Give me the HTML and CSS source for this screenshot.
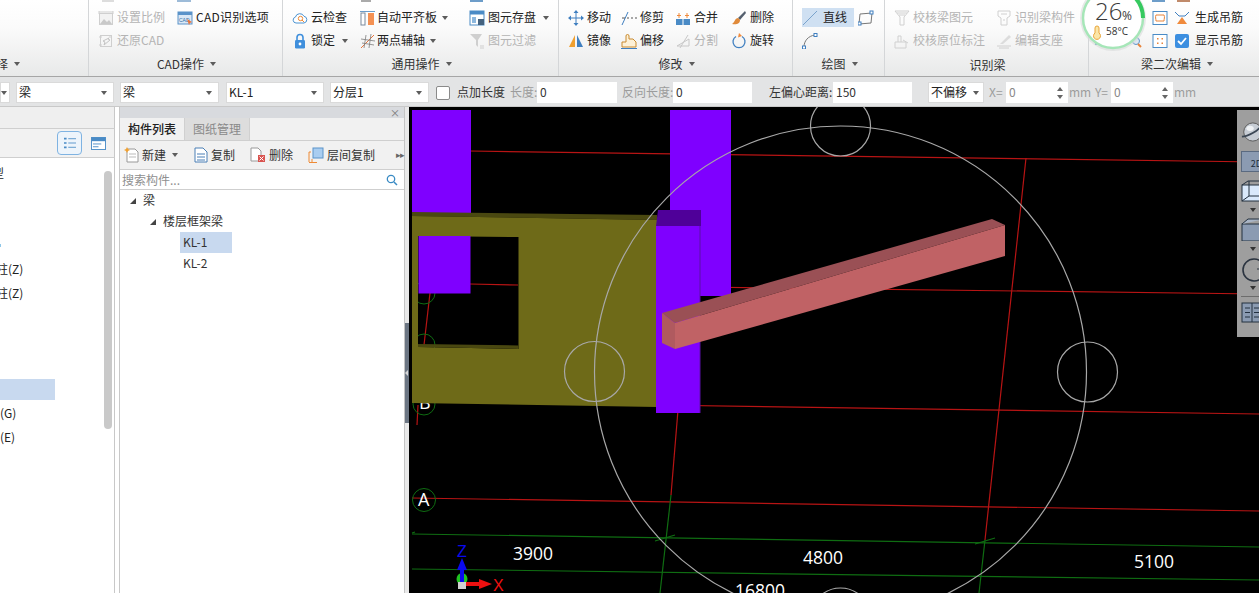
FILE: index.html
```html
<!DOCTYPE html>
<html lang="zh-CN">
<head>
<meta charset="utf-8">
<title>梁 绘图</title>
<link rel="stylesheet" href="styles.css">
</head>
<body>
<div class="app">
  <header class="ribbon">
    <section class="group g0">
      <div class="rows"></div>
      <div class="label label-end"><span class="clip-4">择</span><i class="caret"></i></div>
    </section>
    <section class="group g1">
      <div class="rows">
        <div class="item off"><svg class="ico" viewBox="0 0 16 16"><rect x="1.5" y="3.5" width="13" height="11" fill="#f2f2f2" stroke="#cfcfcf"/><path d="M2 14l4-5 3 3 2-2 3 4z" fill="#c9c9c9"/><path d="M1 1v3M15 1v3M1 2h14" stroke="#cfcfcf" fill="none"/></svg>设置比例</div>
        <div class="item"><svg class="ico" viewBox="0 0 16 16"><rect x="1" y="2" width="14" height="12" fill="#dbe8f5" stroke="#5b93c9"/><rect x="1" y="2" width="14" height="3" fill="#5b93c9"/><text x="2" y="12" class="mini">CAD</text><path d="M10 9l5 3-2 1-1 2z" fill="#e8743b"/></svg><span class="wide">CAD识别选项</span></div>
        <div class="item off"><svg class="ico" viewBox="0 0 16 16"><rect x="2.5" y="2.5" width="11" height="11" fill="none" stroke="#cfcfcf"/><path d="M11 5l-6 3 2 1-1 3 6-5-2-1z" fill="none" stroke="#c4c4c4"/><path d="M1 4h3M1 12h3M12 2v3" stroke="#cfcfcf"/></svg>还原CAD</div>
      </div>
      <div class="label">CAD操作<i class="caret"></i></div>
    </section>
    <section class="group g2">
      <div class="rows">
        <div class="item"><svg class="ico" viewBox="0 0 16 16"><path d="M4 13a3 3 0 0 1-.6-5.9A4.6 4.6 0 0 1 12 6.3 3.4 3.4 0 0 1 12 13z" fill="#fff" stroke="#4b93d1"/><circle cx="8.5" cy="8.5" r="2.2" fill="none" stroke="#ee8a35"/><path d="M10 10l2 2" stroke="#ee8a35"/></svg>云检查</div>
        <div class="item tight"><svg class="ico" viewBox="0 0 16 16"><rect x="1" y="3" width="4" height="12" fill="#fff" stroke="#7a8a9c"/><rect x="8" y="3" width="6" height="12" fill="#f49153"/><path d="M0 1.5h15" stroke="#6d9dc9"/></svg>自动平齐板<i class="caret"></i></div>
        <div class="item"><svg class="ico" viewBox="0 0 16 16"><rect x="1" y="1" width="14" height="14" fill="#fff" stroke="#4a8bc6"/><rect x="1" y="1" width="14" height="3.5" fill="#4a8bc6"/><rect x="3" y="7" width="4" height="6" fill="#8db8de"/><rect x="9" y="9" width="6" height="6" fill="#44627f"/></svg>图元存盘<i class="caret"></i></div>
        <div class="item"><svg class="ico" viewBox="0 0 16 16"><path d="M5 7V4.5a3 3 0 0 1 6 0V7" fill="none" stroke="#3f8fdc" stroke-width="1.6"/><rect x="3" y="7" width="10" height="8.5" rx="1.2" fill="#3f8fdc"/><circle cx="8" cy="11" r="1.4" fill="#fff"/></svg>锁定<i class="caret"></i></div>
        <div class="item tight"><svg class="ico" viewBox="0 0 16 16"><path d="M1 15L14 2" stroke="#e8743b"/><path d="M1 6l14 2M2 10l12 2M6 2l-2 13M11 1L9 15" stroke="#7d7d7d" stroke-width=".8" fill="none"/></svg>两点辅轴<i class="caret"></i></div>
        <div class="item off"><svg class="ico" viewBox="0 0 16 16"><path d="M1 1h12L9 7v7l-2-2V7z" fill="#cfcfcf"/><path d="M11 13h4M11 15h4" stroke="#cfcfcf"/></svg>图元过滤</div>
      </div>
      <div class="label">通用操作<i class="caret"></i></div>
    </section>
    <section class="group g3">
      <div class="rows">
        <div class="item"><svg class="ico" viewBox="0 0 16 16"><path d="M8 2v12M2 8h12" stroke="#3f7fc0"/><path d="M8 0l2.500 3h-5zM8 16l2.500-3h-5zM0 8l3-2.500v5zM16 8l-3-2.500v5z" fill="#3f7fc0"/></svg>移动</div>
        <div class="item"><svg class="ico" viewBox="0 0 16 16"><path d="M1 15L7 2" stroke="#3f7fc0"/><path d="M1 8h3M6 8h2M10 8h2M14 8h2" stroke="#555"/></svg>修剪</div>
        <div class="item"><svg class="ico" viewBox="0 0 16 16"><rect x="1" y="9" width="14" height="6" fill="#4a8bc6"/><path d="M8 9v6" stroke="#fff"/><path d="M4 3v5M2 5.500h4M12 3v5M10 5.500h4" stroke="#f08a3c"/></svg>合并</div>
        <div class="item"><svg class="ico" viewBox="0 0 16 16"><path d="M14 1L7 8l2 2 6-7z" fill="#55606e"/><path d="M7 8c-3 0-3 4-6 6 4 1 8 0 8-4z" fill="#e08a3a"/></svg>删除</div>
        <div class="item"><svg class="ico" viewBox="0 0 16 16"><path d="M7 2L1 14h6z" fill="#f0a030"/><path d="M9 2l6 12H9z" fill="#3f7fc0"/></svg>镜像</div>
        <div class="item"><svg class="ico" viewBox="0 0 16 16"><path d="M1 14v-5h4V3a1.500 1.500 0 0 1 3 0v3h4l3 3v5z" fill="#fdf1d8" stroke="#c98a2e"/><path d="M0 15.500h16" stroke="#3f7fc0"/></svg>偏移</div>
        <div class="item off"><svg class="ico" viewBox="0 0 16 16"><path d="M2 13h12L14 6 2 13z" fill="none" stroke="#c8c8c8"/><path d="M5 15L13 2" stroke="#c8c8c8"/></svg>分割</div>
        <div class="item"><svg class="ico" viewBox="0 0 16 16"><path d="M5 3.500A6 6 0 1 0 11 3.500" fill="none" stroke="#3f7fc0" stroke-width="1.3"/><path d="M8 0l3 3-4 1.500z" fill="#f08a3c"/></svg>旋转</div>
      </div>
      <div class="label">修改<i class="caret"></i></div>
    </section>
    <section class="group g4">
      <div class="rows">
        <div class="item active"><svg class="ico" viewBox="0 0 16 16"><path d="M1 15L15 1" stroke="#7aa3cc"/></svg>直线</div>
        <div class="item"><svg class="ico" viewBox="0 0 16 16"><path d="M2 4l12-1-1 10-12 1z" fill="none" stroke="#777"/><rect x="0" y="12" width="3" height="3" fill="#fff" stroke="#3f7fc0"/><rect x="12" y="1" width="3" height="3" fill="#fff" stroke="#3f7fc0"/></svg></div>
        <div class="item"><svg class="ico" viewBox="0 0 16 16"><path d="M2 14C2 8 6 3 13 2" fill="none" stroke="#777"/><rect x="0.500" y="13" width="3" height="3" fill="#fff" stroke="#3f7fc0"/><rect x="12" y="0.500" width="3" height="3" fill="#fff" stroke="#3f7fc0"/></svg></div>
      </div>
      <div class="label">绘图<i class="caret"></i></div>
    </section>
    <section class="group g5">
      <div class="rows">
        <div class="item off"><svg class="ico" viewBox="0 0 16 16"><path d="M1 1h14l-5 6v8H6V7z" fill="none" stroke="#d0d0d0"/><path d="M3 3h10M5 5h6" stroke="#d0d0d0"/></svg>校核梁图元</div>
        <div class="item off"><svg class="ico" viewBox="0 0 16 16"><path d="M2 1h12v5l-3 2v7H5V8L2 6z" fill="none" stroke="#d0d0d0"/><path d="M5 4h6M7 10h2" stroke="#d0d0d0"/></svg>识别梁构件</div>
        <div class="item off"><svg class="ico" viewBox="0 0 16 16"><path d="M1 9h11v6H1z" fill="none" stroke="#d0d0d0"/><path d="M4 9V3h3v6M9 7l5 3" stroke="#d0d0d0" fill="none"/></svg>校核原位标注</div>
        <div class="item off"><svg class="ico" viewBox="0 0 16 16"><path d="M1 13h14M3 15h10" stroke="#d0d0d0"/><path d="M4 11L13 2l2 2-8 7z" fill="#dcdcdc"/></svg>编辑支座</div>
      </div>
      <div class="label">识别梁</div>
    </section>
    <section class="group g6">
      <div class="rows">
        <div class="item"><svg class="ico" viewBox="0 0 16 16"><rect x="1" y="1.500" width="14" height="13" fill="#fff" stroke="#4a8bc6"/><path d="M4 5h8M4 11h8M4 5c-1 2 0 4 0 6M12 5c1 2 0 4 0 6" stroke="#e8843b" fill="none"/></svg></div>
        <div class="item loose"><svg class="ico" viewBox="0 0 16 16"><path d="M1 2l4 4h6l4-4" fill="none" stroke="#3f7fc0"/><path d="M8 7l5 7H3z" fill="#f08a3c"/></svg>生成吊筋</div>
        <div class="item"><svg class="ico" viewBox="0 0 16 16"><rect x="1" y="1.500" width="14" height="13" fill="#fff" stroke="#4a8bc6"/><path d="M5 5h1.500v1.500H5zM9.500 5H11v1.500H9.500zM5 9.500h1.500V11H5zM9.500 9.500H11V11H9.500z" fill="#e8843b"/></svg></div>
        <div class="item loose"><svg class="ico" viewBox="0 0 16 16"><rect x="1" y="1" width="14" height="14" rx="2" fill="#3d8fe0"/><path d="M4 8l3 3 5-6" fill="none" stroke="#fff" stroke-width="1.800"/></svg>显示吊筋</div>
      </div>
      <div class="label">梁二次编辑<i class="caret"></i></div>
    </section>
    <svg class="topbits" viewBox="0 0 1259 4" aria-hidden="true">
      <rect x="102" y="0" width="12" height="2" fill="#ddd"/>
      <rect x="177" y="0" width="14" height="2" fill="#9dbbd8"/>
      <rect x="361" y="0" width="10" height="2" fill="#aaa"/>
      <rect x="470" y="0" width="13" height="2" fill="#6d9dc9"/>
      <rect x="1152" y="0" width="13" height="2" fill="#6d9dc9"/>
      <rect x="1177" y="0" width="13" height="2" fill="#c08a6a"/>
    </svg>
    <svg class="gauge" viewBox="1078 0 74 56" aria-label="26% 58°C">
      <path d="M1096 41v4M1101 42v4M1106 42v4M1115 42h8" stroke="#4a8bc6" stroke-width="2" fill="none"/>
      <circle cx="1136" cy="41" r="3.500" fill="#dbe8f5" stroke="#5b93c9"/>
      <path d="M1138 44l3 3" stroke="#e8843b" stroke-width="2"/>
      <circle cx="1113" cy="18" r="33" class="g-shadow"/>
      <circle cx="1113" cy="18" r="30" class="g-disc"/>
      <path d="M1134 -3.500A30 30 0 0 1 1143 18" class="g-arc"/>
      <text x="1095" y="20" class="g-num">26</text>
      <text x="1122" y="20" class="g-pct">%</text>
      <path d="M1095 28a2 2 0 0 1 4 0v5a3.500 3.500 0 1 1-4 0z" fill="#fbe6a8" stroke="#e9a53a"/>
      <text x="1106" y="35" class="g-temp">58°C</text>
    </svg>
  </header>

  <div class="optbar">
    <div class="combo c-stub"><i class="caret"></i></div>
    <div class="combo c-98"><span>梁</span><i class="caret"></i></div>
    <div class="combo c-99"><span>梁</span><i class="caret"></i></div>
    <div class="combo c-98 m7"><span>KL-1</span><i class="caret"></i></div>
    <div class="combo c-99"><span>分层1</span><i class="caret"></i></div>
    <span class="check"></span>
    <span class="opt-text dark w48">点加长度</span>
    <span class="opt-text dim w27">长度:</span><span class="field f-80">0</span>
    <span class="opt-text dim w51">反向长度:</span><span class="field f-79">0</span>
    <span class="opt-text dark w64">左偏心距离:</span><span class="field f-79">150</span>
    <div class="combo c-56"><span>不偏移</span><i class="caret"></i></div>
    <span class="opt-text dim w17">X=</span>
    <span class="field spin dimval">0<i class="spinner"><b class="up"></b><b class="down"></b></i></span>
    <span class="opt-text dim w26">mm</span>
    <span class="opt-text dim w16">Y=</span>
    <span class="field spin dimval">0<i class="spinner"><b class="up"></b><b class="down"></b></i></span>
    <span class="opt-text dim">mm</span>
  </div>

  <main class="work">
    <aside class="nav">
      <div class="nav-head"></div>
      <div class="nav-tools">
        <span class="view-btn"><svg viewBox="0 0 16 14" class="view-ico"><path d="M1 2h3M1 7h3M1 12h3" stroke="#4a8bc6" stroke-width="2"/><path d="M6 2h9M6 7h9M6 12h9" stroke="#4a8bc6"/></svg></span>
        <svg viewBox="0 0 16 14" class="view-ico2"><rect x="0.500" y="0.500" width="15" height="13" fill="#fff" stroke="#4a8bc6"/><rect x="0.500" y="0.500" width="15" height="4" fill="#4a8bc6"/><path d="M2 7.500h9M2 10.500h6" stroke="#4a8bc6"/></svg>
      </div>
      <div class="nav-body">
        <ul class="nav-list">
          <li class="clip-8">型</li>
          <li></li>
          <li></li>
          <li><i class="nav-dot"></i></li>
          <li class="clip-4">柱(Z)</li>
          <li class="clip-4">柱(Z)</li>
          <li></li>
          <li></li>
          <li></li>
          <li><span class="nav-sel"></span></li>
          <li>(G)</li>
          <li>(E)</li>
        </ul>
        <div class="scroll"><div class="thumb"></div></div>
      </div>
    </aside>

    <section class="parts">
      <div class="parts-title"><span class="close">×</span></div>
      <div class="tabs">
        <span class="tab on">构件列表</span>
        <span class="tab">图纸管理</span>
      </div>
      <div class="parts-tools">
        <span class="ptool p-new"><svg class="ico" viewBox="0 0 16 16"><path d="M3 2h8l3 3v10H3z" fill="#fff" stroke="#999"/><path d="M5 7h7M5 10h7" stroke="#bbb"/><path d="M3 0l1 2 2 1-2 1-1 2-1-2-2-1 2-1z" fill="#f0a030"/></svg>新建<i class="caret"></i></span>
        <span class="ptool p-copy"><svg class="ico" viewBox="0 0 16 16"><path d="M2 1h8l4 4v10H2z" fill="#fff" stroke="#4a7fb5"/><path d="M4 7h8M4 10h8M4 13h8" stroke="#4a7fb5"/></svg>复制</span>
        <span class="ptool p-del"><svg class="ico" viewBox="0 0 16 16"><path d="M1 1h7l3 3v10H1z" fill="#fff" stroke="#999"/><rect x="8" y="8" width="7" height="7" fill="#d9534f"/><path d="M9.500 9.500l4 4M13.500 9.500l-4 4" stroke="#fff"/></svg>删除</span>
        <span class="ptool p-floor"><svg class="ico" viewBox="0 0 16 16"><path d="M1 15V5h2M4 15v-3" stroke="#ee8a35" fill="none"/><path d="M1 15.500h8" stroke="#ee8a35"/><rect x="5" y="1" width="10" height="10" fill="#a9cdf0" stroke="#5b93c9"/></svg>层间复制</span>
        <span class="more">▸▸</span>
      </div>
      <div class="search">
        <span class="search-text">搜索构件...</span>
        <svg class="search-ico" viewBox="0 0 12 12"><circle cx="5" cy="5" r="3.700" fill="none" stroke="#3a8bc4" stroke-width="1.300"/><path d="M8 8l3 3" stroke="#3a8bc4" stroke-width="1.500"/></svg>
      </div>
      <ul class="tree">
        <li class="lvl1"><i class="tw"></i>梁</li>
        <li class="lvl2"><i class="tw"></i>楼层框架梁</li>
        <li class="lvl3"><span class="leaf sel">KL-1</span></li>
        <li class="lvl3"><span class="leaf">KL-2</span></li>
      </ul>
    </section>

    <div class="splitter"><span class="grip"><i></i></span></div>

    <section class="viewport">
      <svg class="scene" viewBox="409 107 850 486" aria-label="三维视图">
        <g class="red">
          <path d="M470 151L1259 162"/>
          <path d="M700 287L1259 294"/>
          <path d="M470 284L518 285"/>
          <path d="M656 405L1259 414"/>
          <path d="M412 498L1259 511"/>
          <path d="M1026 158L985 540"/>
          <path d="M678 410L671 495"/>
          <path d="M430 293L424 345"/>
          <path d="M418 405L417 425"/>
        </g>
        <g class="green">
          <path d="M412 534L1259 547"/>
          <path d="M412 569L1259 580"/>
          <path d="M671 495L660 593"/>
          <path d="M985 540L979 593"/>
          <path d="M655 541L675 535M975 544L995 538M412 533l3-1"/>
          <circle cx="424" cy="293" r="11"/>
          <circle cx="424" cy="345" r="11"/>
          <circle cx="424" cy="404" r="11"/>
          <circle cx="424" cy="500" r="11.500"/>
        </g>
        <text x="419" y="409" class="axis">B</text>
        <text x="418" y="506" class="axis">A</text>

        <rect x="412" y="110" width="59" height="103" class="pur"/>
        <rect x="670" y="110" width="61" height="186" class="pur"/>

        <path d="M412 212L657 215V220L412 216z" class="olive-d"/>
        <path fill-rule="evenodd" d="M412 216L657 220V407L412 403zM418 236V347L518.500 349V237z" class="olive"/>
        <path d="M418 344L518.500 345.500V349L418 347z" class="olive-d"/>
        <rect x="418.500" y="236" width="52" height="57.500" class="pur"/>

        <g class="ring">
          <circle cx="840.500" cy="372" r="246"/>
          <circle cx="840.500" cy="126" r="30"/>
          <circle cx="594.500" cy="371.500" r="30"/>
          <circle cx="1087.500" cy="372" r="30"/>
          <circle cx="840.500" cy="618" r="30"/>
        </g>

        <path d="M658 210L701 210V226H656z" class="pur-d"/>
        <path d="M656 226H700V413H656z" class="pur"/>
        <path d="M700 226V413" class="pur-edge"/>

        <path d="M662 313L992 219L1005 225L675 323z" class="beam-top"/>
        <path d="M662 313L675 323V349L662 343z" class="beam-end"/>
        <path d="M675 323L1005 225V256L675 349z" class="beam-front"/>

        <text x="513" y="560" class="dim-t">3900</text>
        <text x="803" y="564" class="dim-t">4800</text>
        <text x="1134" y="568" class="dim-t">5100</text>
        <text x="735" y="597" class="dim-t">16800</text>

        <ellipse cx="462" cy="579" rx="5.500" ry="6" fill="#1fc41f"/>
        <path d="M462 583V568" stroke="#0a0aee" stroke-width="4"/>
        <path d="M462 558l5 12h-10z" fill="#0a0aee"/>
        <rect x="458" y="582" width="8" height="7" fill="#cfcfcf"/>
        <path d="M466 584H480" stroke="#ee1010" stroke-width="4"/>
        <path d="M492 584l-13-5v10z" fill="#ee1010"/>
        <text x="457" y="556.500" class="ax-z">Z</text>
        <text x="493" y="590.500" class="ax-x">X</text>
      </svg>

      <div class="float-bar">
        <svg class="fb-ico fb-sphere" viewBox="0 0 22 22" preserveAspectRatio="xMinYMid meet"><ellipse cx="13" cy="11" rx="10" ry="10" fill="#c6ccd4" stroke="#555"/><path d="M1 16C8 16 20 9 22 4" fill="none" stroke="#3a4654" stroke-width="2"/><ellipse cx="10" cy="7" rx="4" ry="3" fill="#eef1f4"/></svg>
        <div class="fb-btn fb-2d"><span>2D</span></div>
        <svg class="fb-ico fb-cube1" viewBox="0 0 22 22" preserveAspectRatio="xMinYMid meet"><rect x="1" y="5" width="22" height="16" fill="#d9e9fb" stroke="#22303f"/><path d="M1 5l6-4h16M8 1v15H23M8 16l-7 5" fill="none" stroke="#22303f"/></svg>
        <i class="fb-arrow"></i>
        <svg class="fb-ico fb-cube2" viewBox="0 0 22 23" preserveAspectRatio="xMinYMid meet"><rect x="1" y="6" width="22" height="17" fill="#8b9bb2" stroke="#22303f"/><path d="M1 6l6-5h16" fill="#a9b5c6" stroke="#22303f"/></svg>
        <i class="fb-arrow"></i>
        <svg class="fb-ico fb-circle" viewBox="0 0 22 24" preserveAspectRatio="xMinYMid meet"><circle cx="13" cy="12" r="11" fill="none" stroke="#2b3440" stroke-width="1.600"/><path d="M16 11h6" stroke="#2b3440"/></svg>
        <i class="fb-arrow fb-arrow-last"></i>
        <div class="fb-rule"></div>
        <svg class="fb-ico fb-grid" viewBox="0 0 22 21" preserveAspectRatio="xMinYMid meet"><rect x="1" y="1" width="22" height="19" fill="#8b9bb2" stroke="#22303f"/><path d="M4 6h5M4 10.500h5M4 15h5M13 6h5M13 10.500h5M13 15h5M11 1v19" stroke="#22303f"/></svg>
      </div>
    </section>
  </main>
</div>
</body>
</html>
```
FILE: styles.css
```css
* { box-sizing: border-box; }
html, body { margin: 0; height: 100%; overflow: hidden; background: #fff; }
body { font: 12px/1.2 "Noto Sans CJK SC", "Liberation Sans", sans-serif; color: #222; }
ul { list-style: none; margin: 0; padding: 0; }
i { font-style: normal; display: block; }

.app { display: flex; flex-direction: column; width: 1259px; height: 593px; overflow: hidden; }

/* ribbon */
.ribbon { position: relative; display: flex; flex: none; height: 77px; background: linear-gradient(#fff, #fbfbfb 35%, #e8e9e9); border-bottom: 1px solid #a6a6a6; }
.group { display: flex; flex: none; flex-direction: column; padding-top: 6px; border-right: 1px solid #d4d6d8; }
.group:last-of-type { border-right: 0; }
.rows { display: grid; grid-auto-rows: 23px; height: 46px; }
.label { display: flex; align-items: center; justify-content: center; height: 24px; padding-right: 7px; color: #333; }
.g0 { width: 89px; overflow: hidden; }
.g0 .label { justify-content: flex-start; padding: 0; }
.g1 { width: 194px; padding-left: 9px; }
.g1 .rows { grid-template-columns: 79px auto; }
.g2 { width: 276px; padding-left: 9px; }
.g2 .rows { grid-template-columns: 68px 109px auto; }
.g3 { width: 234px; padding-left: 9px; }
.g3 .rows { grid-template-columns: 53px 54px 56px auto; }
.g4 { width: 92px; padding-left: 9px; }
.g4 .rows { grid-template-columns: 56px auto; }
.g5 { width: 204px; padding-left: 9px; }
.g5 .rows { grid-template-columns: 102px auto; }
.g6 { width: 170px; padding-left: 63px; }
.g6 .rows { grid-template-columns: 22px auto; }
.g6 .label { margin-left: -63px; padding-left: 6px; padding-right: 0; }
.g5 .label { padding-top: 3px; }

.item { display: flex; align-items: center; gap: 3px; white-space: nowrap; color: #222; }
.item.tight { gap: 1px; }
.item.loose { gap: 5px; }
.item.off { color: #b4b4b4; }
.item.active { width: 52px; height: 19px; margin-top: 2px; gap: 5px; background: #cfe0f2; }
.wide { letter-spacing: .25px; }
.ico { flex: none; width: 16px; height: 16px; }
.mini { font: 5px "Liberation Sans", sans-serif; fill: #2f6ea8; }
.caret { flex: none; width: 0; height: 0; margin-left: 6px; border: 3.500px solid transparent; border-top: 4px solid #5c5c5c; border-bottom: 0; }
.item .caret { margin-left: 4px; }

.topbits { position: absolute; left: 0; top: 0; width: 1259px; height: 4px; }
.gauge { position: absolute; left: 1078px; top: 0; width: 74px; height: 56px; }
.g-shadow { fill: #d9dadb; opacity: .6; }
.g-disc { fill: #fff; stroke: #a6e6b8; stroke-width: 2.500; }
.g-arc { fill: none; stroke: #36c95f; stroke-width: 4; }
.g-num { font: 300 24px "Open Sans", "Liberation Sans", sans-serif; fill: #3a3a3a; }
.g-pct { font: 12px "Open Sans", "Liberation Sans", sans-serif; fill: #3a3a3a; }
.g-temp { font: 10px "Open Sans", "Liberation Sans", sans-serif; fill: #333; }

/* option bar */
.optbar { display: flex; flex: none; align-items: center; height: 30px; padding-top: 2px; background: #e3e4e5; border-bottom: 1px solid #c9c9c9; }
.combo { display: flex; flex: none; align-items: center; justify-content: space-between; height: 21px; padding: 0 6px 0 2px; margin-right: 6px; background: #fff; border: 1px solid #dadada; color: #222; }
.combo .caret { margin-left: 0; }
.c-stub { width: 10px; padding: 0 2px 0 0; justify-content: flex-end; }
.c-98 { width: 98px; }
.c-99 { width: 99px; }
.c-98.m7 { margin-left: 1px; }
.c-56 { width: 56px; padding: 0 4px 0 2px; margin-left: 16px; margin-right: 5px; }
.check { flex: none; width: 14px; height: 14px; margin: 0 7px 0 1px; background: #fff; border: 1px solid #8a8a8a; border-radius: 2px; }
.opt-text { flex: none; white-space: nowrap; }
.opt-text.dark { color: #333; }
.opt-text.dim { color: #9c9c9c; }
.w48 { width: 48px; margin-right: 5px; }
.w27 { width: 27px; }
.w51 { width: 51px; margin-left: 5px; }
.w64 { width: 64px; margin-left: 17px; }
.w17 { width: 17px; }
.w26 { width: 26px; }
.w16 { width: 16px; }
.field { flex: none; display: flex; align-items: center; height: 21px; padding-left: 3px; background: #fff; color: #333; }
.f-80 { width: 80px; }
.f-79 { width: 79px; }
.spin { width: 62px; margin-right: 1px; }
.dimval { color: #888; }
.spinner { margin-left: auto; display: flex; flex-direction: column; gap: 4px; padding-right: 5px; }
.spinner b { display: block; width: 0; height: 0; border: 3px solid transparent; }
.spinner .up { border-top: 0; border-bottom: 4px solid #666; }
.spinner .down { border-bottom: 0; border-top: 4px solid #666; }

/* main */
.work { display: flex; flex: 1; min-height: 0; }

.nav { display: flex; flex: none; flex-direction: column; width: 120px; background: #fff; border-right: 1px solid #c8c8c8; }
.nav-head { flex: none; width: 115px; height: 22px; background: #efefef; border-bottom: 1px solid #cfcfcf; border-right: 1px solid #c8c8c8; }
.nav-tools { display: flex; flex: none; align-items: center; width: 115px; height: 29px; padding-left: 57px; background: #f2f2f2; border-bottom: 1px solid #cfcfcf; border-right: 1px solid #c8c8c8; }
.view-btn { display: flex; align-items: center; justify-content: center; width: 25px; height: 24px; background: #edf4fb; border: 1px solid #7fb3e2; border-radius: 4px; }
.view-ico { width: 14px; height: 12px; }
.view-ico2 { width: 15px; height: 13px; margin-left: 9px; }
.nav-body { display: flex; flex: 1; width: 115px; border-right: 1px solid #c8c8c8; overflow: hidden; }
.nav-list { flex: 1; padding-top: 3px; overflow: hidden; }
.nav-list li { display: flex; align-items: center; height: 24px; white-space: nowrap; }
.clip-8 { margin-left: -8px; }
.clip-4 { margin-left: -4px; }
.nav-dot { width: 1px; height: 3px; background: #8fc7e8; }
.nav-sel { width: 55px; height: 21px; background: #c8d9ef; }
.scroll { flex: none; width: 10px; padding: 13px 2px 0 0; }
.thumb { width: 8px; height: 258px; background: #c9c9c9; border-radius: 4px; }

.parts { display: flex; flex: none; flex-direction: column; width: 285px; background: #fff; border-right: 1px solid #c4c4c4; }
.parts-title { display: flex; flex: none; align-items: center; justify-content: flex-end; height: 11px; padding-right: 4px; background: #d8dade; }
.close { color: #777; font-size: 10px; line-height: 11px; }
.tabs { display: flex; flex: none; height: 23px; background: #f1f1f1; border-bottom: 1px solid #cfcfcf; }
.tab { display: flex; align-items: center; justify-content: center; width: 65px; color: #8a8a8a; background: #dddddd; border-right: 1px solid #d0d0d0; }
.tab.on { background: #f1f1f1; color: #222; font-weight: 500; }
.parts-tools { display: flex; flex: none; align-items: center; height: 29px; background: #f1f1f1; border-bottom: 1px solid #cfcfcf; padding-left: 4px; }
.ptool { display: flex; align-items: center; gap: 3px; color: #333; white-space: nowrap; }
.ptool .caret { margin-left: 4px; }
.p-new { width: 69px; gap: 2px; }
.p-copy { width: 57px; gap: 2px; }
.p-del { width: 58px; }
.p-floor { width: 88px; }
.more { color: #666; font-size: 9px; letter-spacing: -1px; }
.search { display: flex; flex: none; align-items: center; justify-content: space-between; height: 20px; padding: 1px 6px 0 2px; border-bottom: 1px solid #cfcfcf; }
.search-text { color: #8f8f8f; }
.search-ico { width: 12px; height: 12px; }
.tree li { display: flex; align-items: center; height: 21px; white-space: nowrap; color: #333; }
.tw { width: 0; height: 0; margin-right: 7px; border-style: solid; border-width: 0 0 6px 6px; border-color: transparent transparent #444 transparent; }
.lvl1 { padding-left: 10px; }
.lvl2 { padding-left: 30px; }
.lvl3 { padding-left: 60px; }
.leaf { display: flex; align-items: center; width: 52px; height: 21px; padding-left: 3px; }
.leaf.sel { background: #c8d9ef; }

.splitter { position: relative; flex: none; width: 4px; background: #e9e9e9; }
.grip { position: absolute; left: 0; top: 216px; display: flex; align-items: center; width: 4px; height: 100px; background: #6c7683; }
.grip i { width: 0; height: 0; border: 3px solid transparent; border-left: 0; border-right: 3px solid #d8d8d8; }

.viewport { position: relative; flex: 1; min-width: 0; background: #000; overflow: hidden; }
.scene { display: block; width: 850px; height: 486px; }
.red path { stroke: #b81414; stroke-width: 1.200; fill: none; }
.green path { stroke: #0f6d12; stroke-width: 1.200; fill: none; }
.green circle { stroke: #0f6d12; stroke-width: 1; fill: none; }
.ring circle { stroke: #a8a8a8; stroke-width: 1.200; fill: none; }
.axis { font: 18px "Open Sans", "Liberation Sans", sans-serif; fill: #fff; }
.pur { fill: #7f00ff; }
.pur-d { fill: #4f0099; }
.pur-edge { stroke: #5a10a8; stroke-width: 1; }
.olive { fill: #6e6a18; }
.olive-d { fill: #4a4810; }
.beam-top { fill: #9a5055; }
.beam-end { fill: #b05a5f; }
.beam-front { fill: #c06265; }
.dim-t { font: 17.500px "Open Sans", "Liberation Sans", sans-serif; fill: #fff; }
.ax-z { font: 16px "Liberation Sans", sans-serif; fill: #0a0aee; }
.ax-x { font: 16px "Liberation Sans", sans-serif; fill: #ee1010; }

.float-bar { position: absolute; left: 828px; top: 3px; display: flex; flex-direction: column; align-items: flex-start; width: 22px; height: 227px; padding: 12px 0 0 4px; background: #9e9e9e; overflow: hidden; }
.fb-ico { flex: none; display: block; width: 22px; }
.fb-sphere { height: 20px; margin-bottom: 9px; }
.fb-btn { flex: none; width: 22px; height: 21px; background: #8b9bb2; border: 1px solid #5a6a80; }
.fb-2d { display: flex; align-items: flex-end; justify-content: flex-end; font-size: 9px; color: #1c2c3c; padding: 0 0 1px 0; }
.fb-cube1 { height: 22px; margin-top: 8px; }
.fb-arrow { flex: none; width: 0; height: 0; margin: 6px 0 6px 9px; border: 3.500px solid transparent; border-top: 4px solid #333; border-bottom: 0; }
.fb-arrow-last { margin-top: 4px; }
.fb-cube2 { height: 23px; }
.fb-circle { height: 24px; margin-top: 1px; }
.fb-rule { flex: none; width: 20px; height: 1px; background: #6c6c6c; }
.fb-grid { height: 21px; margin-top: 5px; }
```
